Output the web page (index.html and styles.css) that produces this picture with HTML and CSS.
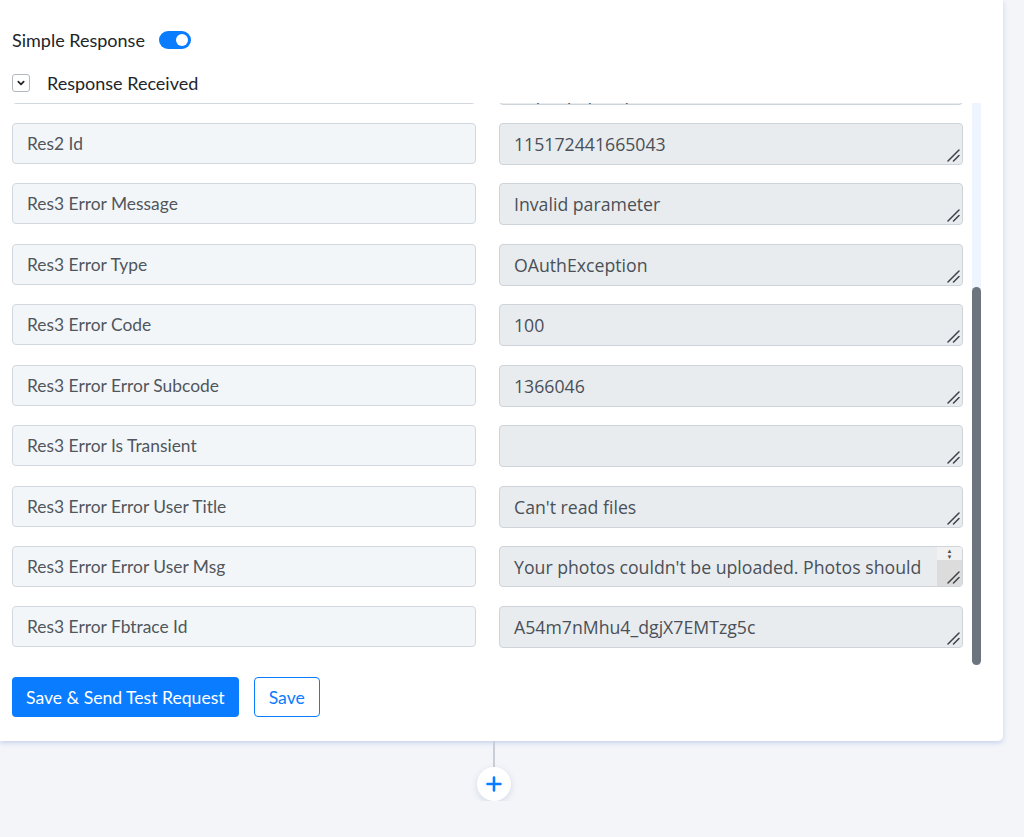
FILE: index.html
```html
<!DOCTYPE html>
<html lang="en">
<head>
  <meta charset="UTF-8" />
  <title>Response Received</title>
  <link rel="stylesheet" href="styles.css">
</head>
<body>

  <div class="card">
    <div class="toggle-row">
      <span class="toggle-label">Simple Response</span>
      <span class="toggle on"><span class="knob"></span></span>
    </div>

    <div class="collapse-row">
      <span class="chevron-box">
        <svg width="12" height="12" viewBox="0 0 12 12"><path d="M3.3 4.6 L6 7.3 L8.7 4.6" fill="none" stroke="#222" stroke-width="1.7" stroke-linecap="round" stroke-linejoin="round"/></svg>
      </span>
      <span class="collapse-title">Response Received</span>
    </div>

    <div class="fields-box">
      <div class="fields" id="fields">
        <!-- rows are built from the data below -->
      </div>
      <div class="track">
        <div class="track-space"></div>
        <div class="thumb"></div>
      </div>
    </div>

    <div class="actions">
      <button class="btn btn-primary">Save &amp; Send Test Request</button>
      <button class="btn btn-outline">Save</button>
    </div>
  </div>

  <div class="connector">
    <div class="line"></div>
    <button class="add-step">
      <svg width="16" height="16" viewBox="0 0 16 16"><path d="M8 1.5 V14.5 M1.5 8 H14.5" stroke="#0a7cff" stroke-width="2.6" stroke-linecap="round"/></svg>
    </button>
  </div>

  <script>
    const fields = document.getElementById('fields');

    const rows = [
      ['Res1 Code', '200'],
      ['Res1 Id', '115172441665043_122103581624'],
      ['Res2 Code', '200'],
      ['Res2 Headers', 'application/json; charset=UTF-8'],
      ['Res2 Body', 'Your photos will appear here once they have been uploaded to the page'],
      ['Res2 Id', '115172441665043'],
      ['Res3 Error Message', 'Invalid parameter'],
      ['Res3 Error Type', 'OAuthException'],
      ['Res3 Error Code', '100'],
      ['Res3 Error Error Subcode', '1366046'],
      ['Res3 Error Is Transient', ''],
      ['Res3 Error Error User Title', "Can't read files"],
      ['Res3 Error Error User Msg', "Your photos couldn't be uploaded. Photos should be saved as JPG, PNG, GIF, TIFF, HEIF or WebP files.", true],
      ['Res3 Error Fbtrace Id', 'A54m7nMhu4_dgjX7EMTzg5c']
    ];

    const grip = `<svg class="grip" width="14" height="14" viewBox="0 0 14 14">
      <path d="M13 1 L2 12 M13 6.5 L7.5 12" stroke="#3d4248" stroke-width="1.5" stroke-linecap="round"/></svg>`;

    rows.forEach(([key, val, long]) => {
      const row = document.createElement('div');
      row.className = 'field-row';
      row.innerHTML = `
        <input class="key" type="text" value="${key}" readonly />
        <div class="val-wrap">
          <textarea class="val${long ? ' long' : ''}" rows="1" readonly>${val}</textarea>
          ${long ? '<div class="mini-scroll"><span class="arr">&#9650;</span><span class="arr">&#9660;</span></div>' : ''}
          ${grip}
        </div>`;
      fields.appendChild(row);
    });

    // keep the list scrolled to the last entries
    fields.scrollTop = fields.scrollHeight;
  </script>
</body>
</html>
```

FILE: styles.css
```css
body {
  margin: 0;
  padding: 0;
  background: #f3f5f9;
  font-family: Lato, 'Open Sans', sans-serif;
  color: #212529;
}
.card {
  width: 1003px;
  box-sizing: border-box;
  background: #fff;
  padding: 22px 12px 24px 12px;
  border-radius: 0 0 5px 0;
  box-shadow: 0 2px 5px rgba(150, 168, 220, 0.45);
}
.toggle-row {
  display: flex;
  align-items: center;
  height: 36px;
  gap: 14px;
}
.toggle-label {
  font-size: 18px;
}
.toggle {
  position: relative;
  width: 32px;
  height: 18px;
  border-radius: 9px;
  background: #d0d5dc;
}
.toggle.on {
  background: #0a7cff;
}
.knob {
  position: absolute;
  top: 3px;
  right: 3px;
  width: 12px;
  height: 12px;
  border-radius: 50%;
  background: #fff;
}
.collapse-row {
  display: flex;
  align-items: center;
  height: 36px;
  margin-top: 7px;
  gap: 17px;
}
.chevron-box {
  width: 16px;
  height: 16px;
  border: 1px solid #b3b8be;
  border-radius: 3px;
  display: flex;
  align-items: center;
  justify-content: center;
}
.collapse-title {
  font-size: 18px;
}

/* scrolling field list with a drawn scrollbar */
.fields-box {
  display: flex;
  margin-top: 2px;
  height: 562px;
  width: 969px;
}
.fields {
  width: 960px;
  overflow-y: auto;
  scrollbar-width: none;
}
.fields::-webkit-scrollbar {
  display: none;
}
.track {
  width: 9px;
  display: flex;
  flex-direction: column;
  background: #eef5fe;
}
.track-space {
  height: 184px;
}
.thumb {
  flex: 1;
  background: #6c757d;
  border-radius: 5px;
}
.field-row {
  display: grid;
  grid-template-columns: 464px 464px;
  column-gap: 23px;
  align-items: start;
  margin-bottom: 18.5px;
}
.field-row:nth-child(5) {
  margin-bottom: 17.5px;
}
.field-row:last-child {
  margin-bottom: 17px;
}
.key {
  height: 41px;
  box-sizing: border-box;
  padding: 0 14px;
  font-family: Lato, sans-serif;
  font-size: 17.4px;
  color: #50565c;
  background: #f3f6f9;
  border: 1px solid #d3d8de;
  border-radius: 4px;
  outline: none;
}
.val-wrap {
  position: relative;
}
.val {
  display: block;
  width: 100%;
  height: 42px;
  box-sizing: border-box;
  padding: 7px 14px;
  font-family: 'Open Sans', sans-serif;
  font-size: 17.7px;
  line-height: 26px;
  color: #495057;
  background: #e9ecef;
  border: 1px solid #ced4da;
  border-radius: 4px;
  resize: none;
  outline: none;
  overflow: hidden;
}
.val.long {
  height: 41px;
  padding-right: 34px;
}
.grip {
  position: absolute;
  right: 3px;
  bottom: 2px;
}
.mini-scroll {
  position: absolute;
  top: 1px;
  right: 1px;
  bottom: 1px;
  width: 25px;
  border-radius: 0 3px 3px 0;
  display: flex;
  flex-direction: column;
  align-items: center;
  background: linear-gradient(#f1f1f1 0, #f1f1f1 13px, #dcdcdc 13px);
}
.arr {
  font-size: 6px;
  line-height: 6px;
  color: #505050;
}
.arr:first-child {
  margin-top: 1px;
}
.actions {
  display: flex;
  gap: 15px;
  margin-top: 12px;
}
.btn {
  height: 40px;
  padding: 0 14px;
  font-family: Lato, sans-serif;
  font-size: 17.6px;
  border-radius: 4px;
  cursor: pointer;
}
.btn-primary {
  background: #0a7cff;
  color: #fff;
  border: none;
}
.btn-outline {
  background: #fff;
  color: #0a7cff;
  border: 1px solid #0a7cff;
}
.connector {
  width: 988px;
  display: flex;
  flex-direction: column;
  align-items: center;
}
.line {
  width: 2px;
  height: 26px;
  background: #c9ced6;
}
.add-step {
  width: 34px;
  height: 34px;
  border-radius: 50%;
  border: none;
  background: #fff;
  box-shadow: 0 2px 6px rgba(120, 135, 170, 0.25);
  display: flex;
  align-items: center;
  justify-content: center;
  padding: 0;
}
```
